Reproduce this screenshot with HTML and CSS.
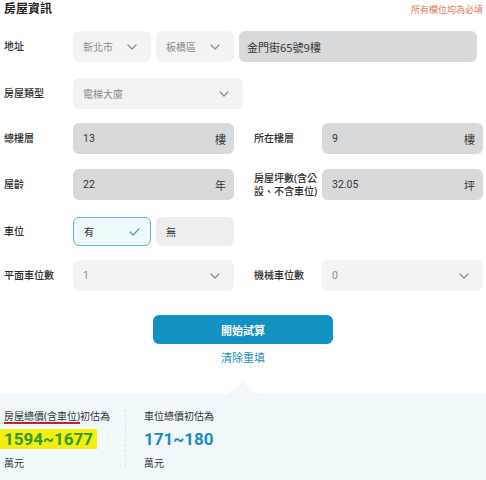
FILE: index.html
```html
<!DOCTYPE html>
<html lang="zh-Hant">
<head>
<meta charset="utf-8">
<link rel="stylesheet" href="styles.css">
</head>
<body>
<div class="page">
  <div class="head">
    <h1 class="title">房屋資訊</h1>
    <span class="req">所有欄位均為必填</span>
  </div>

  <div class="row r1">
    <span class="label">地址</span>
    <div class="addr">
      <div class="sel w78"><span>新北市</span><svg class="chev" viewBox="0 0 10 6"><path d="M1 1l4 4 4-4"/></svg></div>
      <div class="sel w78"><span>板橋區</span><svg class="chev" viewBox="0 0 10 6"><path d="M1 1l4 4 4-4"/></svg></div>
      <div class="inp full"><span>金門街65號9樓</span></div>
    </div>
  </div>

  <div class="row r2">
    <span class="label">房屋類型</span>
    <div class="sel w170"><span>電梯大廈</span><svg class="chev" viewBox="0 0 10 6"><path d="M1 1l4 4 4-4"/></svg></div>
  </div>

  <div class="row r3">
    <span class="label">總樓層</span>
    <div class="inp"><span class="num">13</span><span class="unit">樓</span></div>
    <span class="label right">所在樓層</span>
    <div class="inp"><span class="num">9</span><span class="unit">樓</span></div>
  </div>

  <div class="row r4">
    <span class="label">屋齡</span>
    <div class="inp"><span class="num">22</span><span class="unit">年</span></div>
    <span class="label right two">房屋坪數(含公設、不含車位)</span>
    <div class="inp"><span class="num">32.05</span><span class="unit">坪</span></div>
  </div>

  <div class="row r5">
    <span class="label">車位</span>
    <div class="opts">
      <div class="opt on"><span>有</span><svg class="check" viewBox="0 0 12 9"><path d="M1 4.5l3.5 3.5L11 1"/></svg></div>
      <div class="opt"><span>無</span></div>
    </div>
  </div>

  <div class="row r6">
    <span class="label">平面車位數</span>
    <div class="sel"><span class="num">1</span><svg class="chev" viewBox="0 0 10 6"><path d="M1 1l4 4 4-4"/></svg></div>
    <span class="label right">機械車位數</span>
    <div class="sel"><span class="num">0</span><svg class="chev" viewBox="0 0 10 6"><path d="M1 1l4 4 4-4"/></svg></div>
  </div>

  <div class="actions">
    <button class="btn">開始試算</button>
    <a class="reset">清除重填</a>
  </div>

  <div class="result">
    <svg class="notch" viewBox="0 0 60 16"><path d="M0 16C18 16 26 10 30 0 34 10 42 16 60 16Z"/></svg>
    <div class="col">
      <div class="cap"><span class="mark">房屋總價(含車位)</span>初估為</div>
      <div class="big green"><span class="hl">1594~1677</span></div>
      <div class="cap unitw">萬元</div>
    </div>
    <div class="divider"></div>
    <div class="col">
      <div class="cap">車位總價初估為</div>
      <div class="big blue">171~180</div>
      <div class="cap unitw">萬元</div>
    </div>
  </div>
</div>
</body>
</html>
```

FILE: styles.css
```css
* { box-sizing: border-box; }
html, body { margin: 0; padding: 0; background: #fff; }
body {
  font-family: "Noto Sans", "Noto Sans CJK TC", sans-serif;
  color: #333;
  width: 486px;
  height: 480px;
  overflow: hidden;
}
.page { display: flex; flex-direction: column; }
.head {
  display: flex;
  justify-content: space-between;
  align-items: flex-start;
  padding: 0 3px 0 4px;
  height: 31px;
}
.title {
  margin: 1px 0 0;
  font-size: 12px;
  font-weight: 700;
  line-height: 16px;
  color: #222;
}
.req {
  margin-top: 4px;
  font-size: 9px;
  line-height: 12px;
  color: #e4775a;
}
.row {
  display: grid;
  grid-template-columns: 69px 161px 88px 161px;
  padding-left: 4px;
  align-items: center;
}
.label {
  font-size: 10px;
  color: #2a2a2a;
  line-height: 13px;
  white-space: nowrap;
  font-weight: 500;
}
.label.right { padding-left: 20px; }
.label.two { white-space: normal; padding-right: 2px; }
.r2 { margin-top: 16px; }
.r3 { margin-top: 14px; }
.r4 { margin-top: 15px; }
.r5 { margin-top: 17px; }
.r6 { margin-top: 14px; }

.addr { display: flex; gap: 5px; grid-column: 2 / 5; }
.sel, .inp, .opt {
  height: 31px;
  border-radius: 6px;
  display: flex;
  align-items: center;
  justify-content: space-between;
  padding: 0 14px 0 10px;
  font-size: 10px;
}
.sel { background: #f3f3f3; color: #8a8a8a; }
.inp { background: #d8d9db; color: #333; }
.w78 { width: 78px; }
.w170 { width: 170px; }
.full { width: 238px; padding-left: 8px; font-size: 11px; color: #333; }
.num { font-family: "Roboto", "Noto Sans CJK TC", sans-serif; font-size: 10.5px; }
.sel .num { color: #8a8a8a; }
.inp .unit { font-size: 11px; color: #333; margin-right: -6px; }
.chev { width: 10px; height: 6px; fill: none; stroke: #8c8c8c; stroke-width: 1.3; stroke-linecap: round; stroke-linejoin: round; }

.opts { display: flex; gap: 5px; grid-column: 2 / 3; }
.opt { width: 78px; height: 29px; background: #eeeeee; padding: 0 10px 0 10px; color: #333; }
.opt.on { background: #eef9fb; border: 1px solid #62b8c6; }
.check { width: 11px; height: 8px; fill: none; stroke: #3c9fb0; stroke-width: 1.4; stroke-linecap: round; stroke-linejoin: round; }

.actions {
  display: flex;
  flex-direction: column;
  align-items: center;
  margin-top: 24px;
}
.btn {
  width: 180px;
  height: 29px;
  border: 0;
  border-radius: 6px;
  background: #1192c3;
  color: #fff;
  font-family: "Noto Sans CJK TC", sans-serif;
  font-size: 11px;
  font-weight: 700;
  padding: 0;
}
.reset {
  margin-top: 6px;
  font-size: 11px;
  line-height: 16px;
  color: #1a8fb5;
}

.result {
  position: relative;
  margin-top: 28px;
  background: #f1f8fc;
  height: 100px;
  display: flex;
  padding: 15px 0 0 4px;
}
.notch {
  position: absolute;
  left: 213px;
  top: -15px;
  width: 60px;
  height: 16px;
  fill: #f1f8fc;
}
.col { display: flex; flex-direction: column; }
.cap { font-size: 10px; line-height: 15px; color: #333; }
.mark {
  text-decoration: underline;
  text-decoration-color: #c8202a;
  text-decoration-thickness: 2px;
  text-underline-offset: 2px;
}
.big {
  font-family: "Roboto", "Noto Sans", sans-serif;
  font-size: 17px;
  font-weight: 700;
  line-height: 21px;
  margin-top: 5px;
}
.green { color: #31992f; }
.blue { color: #1a8dbe; }
.hl { background: #f4ee10; margin-left: -4px; padding: 0 4px; }
.unitw { margin-top: 6px; }
.divider {
  width: 0;
  height: 58px;
  border-left: 1px dashed #dfe5e8;
  margin: 0 18px 0 15px;
}
```
